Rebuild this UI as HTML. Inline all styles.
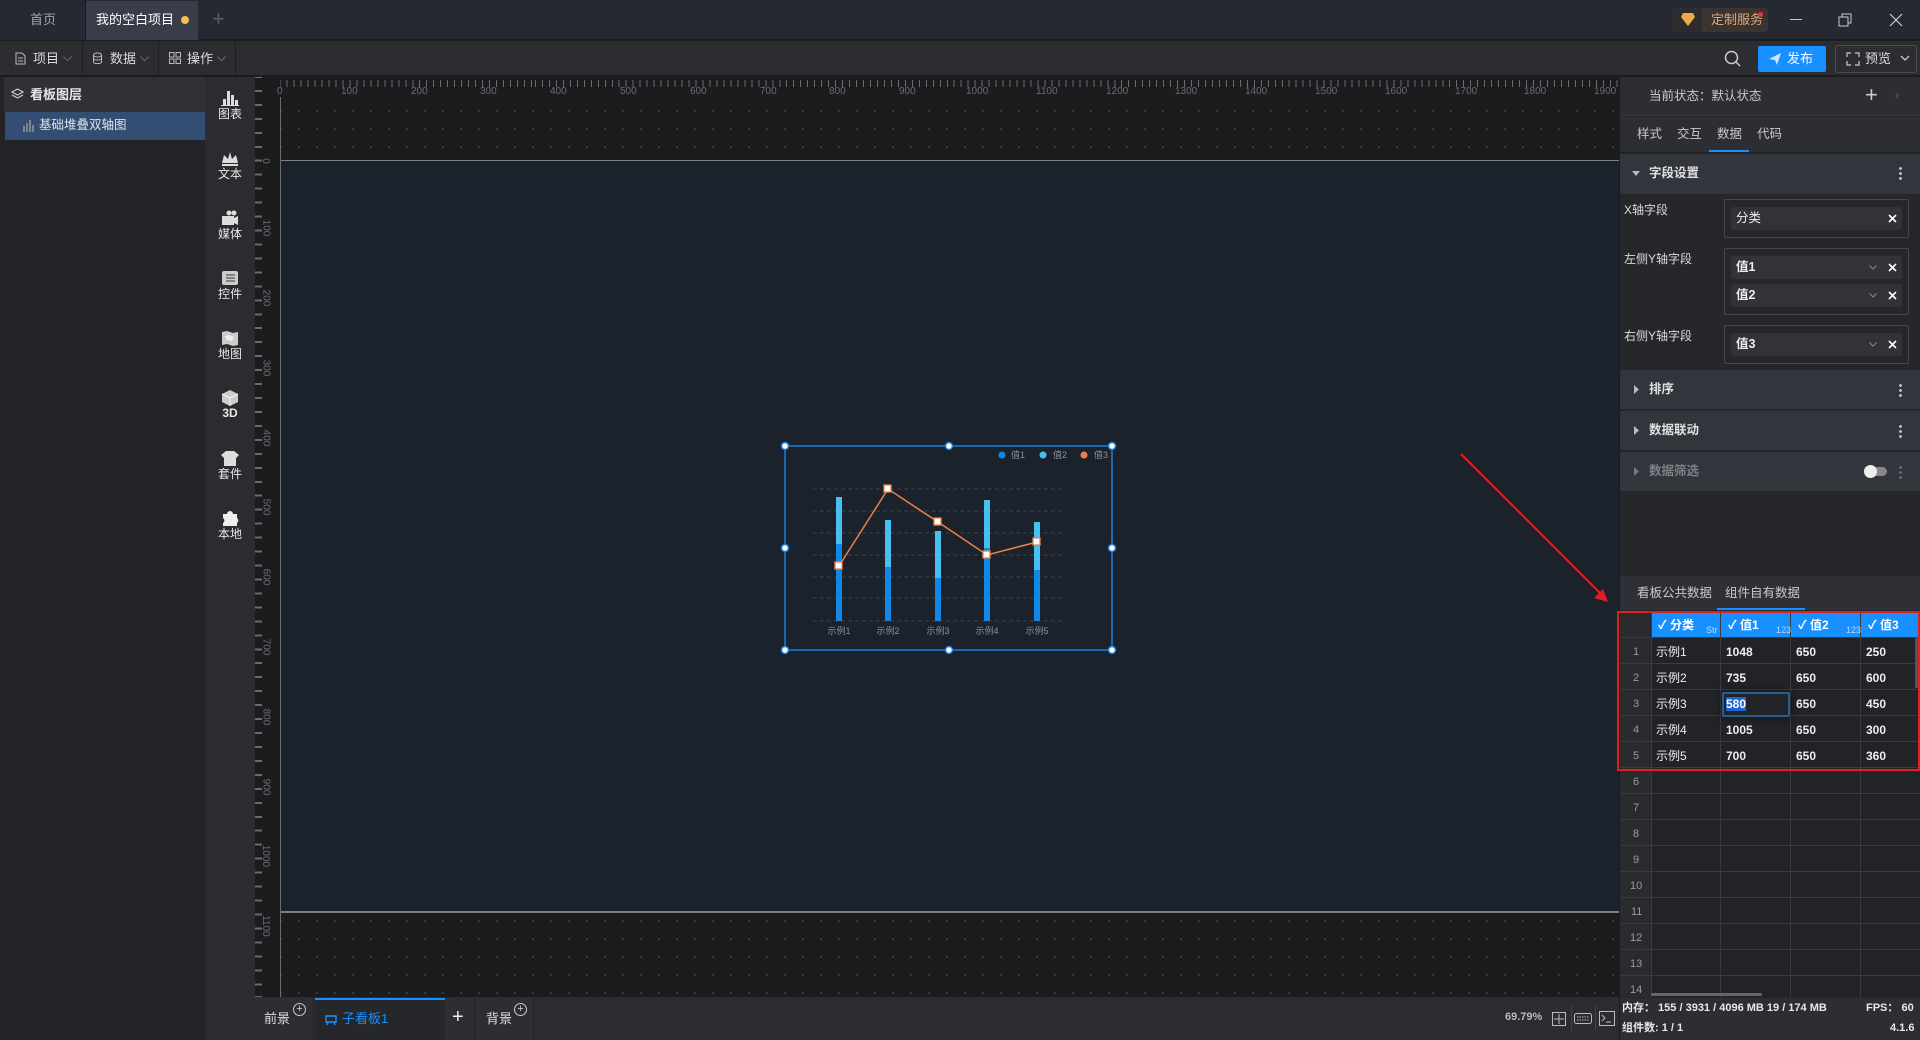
<!DOCTYPE html>
<html><head><meta charset="utf-8">
<style>
*{margin:0;padding:0;box-sizing:border-box}
body{width:1920px;height:1040px;overflow:hidden;background:#1b1c1e;font-family:"Liberation Sans","Noto Sans CJK SC",sans-serif;font-size:12px;line-height:1.2;color:#d0d2d6;position:relative}
.a{position:absolute}
.t{position:absolute;white-space:nowrap}
</style></head><body>
<!-- title bar -->
<div class="a" style="left:0;top:0;width:1920px;height:40px;background:#262931;border-bottom:1px solid #1a1b1e"></div>
<div class="a" style="left:0;top:0;width:86px;height:40px;background:#262931;border-right:1px solid #1a1b1e"></div>
<div class="t" style="left:30px;top:12px;color:#a0a3aa;font-size:13px">首页</div>
<div class="a" style="left:86px;top:1px;width:112px;height:39px;background:#393d49"></div>
<div class="t" style="left:96px;top:12px;color:#fff;font-size:13px">我的空白项目</div>
<div class="a" style="left:181px;top:16px;width:8px;height:8px;border-radius:50%;background:#f6c04e"></div>
<div class="t" style="left:212px;top:6px;color:#555a63;font-size:22px;font-weight:300">+</div>
<div class="a" style="left:1672px;top:8px;width:96px;height:24px;background:#3a332e;border-radius:3px"></div>
<div class="a" style="left:1672px;top:8px;width:30px;height:24px;background:#2c2c2f;border-radius:3px 0 0 3px"></div>
<svg class="a" style="left:1681px;top:13px" width="14" height="13"><path d="M2 0h10l2 4-7 9-7-9z" fill="#f0a94a"/></svg>
<div class="t" style="left:1711px;top:12px;color:#d9a982;font-size:13px">定制服务</div>
<div class="a" style="left:1758px;top:12px;width:5px;height:5px;border-radius:50%;background:#e53a3a"></div>
<div class="a" style="left:1790px;top:19px;width:12px;height:1px;background:#ccc"></div>
<svg class="a" style="left:1838px;top:13px" width="15" height="14"><rect x="1" y="4" width="9" height="9" fill="none" stroke="#ccc"/><path d="M4 4V1h9v9h-3" fill="none" stroke="#ccc"/></svg>
<svg class="a" style="left:1889px;top:13px" width="14" height="14"><path d="M1 1l12 12M13 1L1 13" stroke="#ccc" stroke-width="1.2"/></svg>

<!-- menu bar -->
<div class="a" style="left:0;top:41px;width:1920px;height:35px;background:#2c2d31;border-bottom:1px solid #1a1b1e"></div>
<div class="a" style="left:82px;top:41px;width:1px;height:35px;background:#1e1f22"></div>
<div class="a" style="left:158px;top:41px;width:1px;height:35px;background:#1e1f22"></div>
<div class="a" style="left:235px;top:41px;width:1px;height:35px;background:#1e1f22"></div>
<svg class="a" style="left:15px;top:52px" width="11" height="13"><path d="M1 1h6l3 3v8H1z M3 6h5M3 9h5" fill="none" stroke="#bbb"/></svg>
<div class="t" style="left:33px;top:51px;font-size:13px;color:#ddd">项目</div><div class="t" style="left:63px;top:50px;color:#999">⌵</div>
<svg class="a" style="left:92px;top:52px" width="11" height="13"><ellipse cx="5.5" cy="3" rx="4" ry="2" fill="none" stroke="#bbb"/><path d="M1.5 3v7c0 2 8 2 8 0V3M1.5 6.5c0 2 8 2 8 0" fill="none" stroke="#bbb"/></svg>
<div class="t" style="left:110px;top:51px;font-size:13px;color:#ddd">数据</div><div class="t" style="left:140px;top:50px;color:#999">⌵</div>
<svg class="a" style="left:169px;top:52px" width="12" height="12"><rect x="0.5" y="0.5" width="4.5" height="4.5" fill="none" stroke="#bbb"/><rect x="7" y="0.5" width="4.5" height="4.5" fill="none" stroke="#bbb"/><rect x="0.5" y="7" width="4.5" height="4.5" fill="none" stroke="#bbb"/><rect x="7" y="7" width="4.5" height="4.5" fill="none" stroke="#bbb"/></svg>
<div class="t" style="left:187px;top:51px;font-size:13px;color:#ddd">操作</div><div class="t" style="left:217px;top:50px;color:#999">⌵</div>
<svg class="a" style="left:1724px;top:50px" width="17" height="17"><circle cx="7.5" cy="7.5" r="6" fill="none" stroke="#ccc" stroke-width="1.5"/><path d="M12 12l4 4" stroke="#ccc" stroke-width="1.5"/></svg>
<div class="a" style="left:1758px;top:46px;width:68px;height:26px;background:#1890ff;border-radius:2px"></div>
<svg class="a" style="left:1769px;top:53px" width="12" height="12"><path d="M0 6l12-6-4 12-2-5z" fill="#cfe6ff"/></svg>
<div class="t" style="left:1787px;top:51px;color:#fff;font-size:13px">发布</div>
<div class="a" style="left:1835px;top:45px;width:82px;height:28px;border:1px solid #4a4c52;border-radius:3px"></div>
<svg class="a" style="left:1846px;top:52px" width="14" height="14"><path d="M1 5V1h4M9 1h4v4M13 9v4H9M5 13H1V9" fill="none" stroke="#ccc" stroke-width="1.2"/></svg>
<div class="t" style="left:1865px;top:51px;color:#ddd;font-size:13px">预览</div>
<svg class="a" style="left:1900px;top:55px" width="10" height="7"><path d="M1 1l4 4 4-4" fill="none" stroke="#ccc" stroke-width="1.3"/></svg>

<!-- layer panel -->
<div class="a" style="left:0;top:77px;width:205px;height:963px;background:#232427"></div>
<div class="a" style="left:4px;top:77px;width:201px;height:35px;background:#303136"></div>
<svg class="a" style="left:11px;top:88px" width="13" height="12"><path d="M6.5 1l5.5 3-5.5 3-5.5-3z M1 7l5.5 3 5.5-3" fill="none" stroke="#ccc" stroke-width="1.2"/></svg>
<div class="t" style="left:30px;top:87px;color:#e6e6e6;font-size:13px;font-weight:bold">看板图层</div>
<div class="a" style="left:5px;top:112px;width:200px;height:28px;background:#344d72"></div>
<svg class="a" style="left:23px;top:120px" width="11" height="12"><path d="M1 12V6M4 12V3M7 12V0M10 12V5" stroke="#999" stroke-width="1.5"/></svg>
<div class="t" style="left:39px;top:118px;color:#dfe4ea;font-size:12.5px">基础堆叠双轴图</div>

<!-- toolbar -->
<div class="a" style="left:205px;top:77px;width:50px;height:920px;background:#2b2c30"></div>
<div class="a" style="left:205px;top:997px;width:50px;height:43px;background:#2b2c30"></div>
<div style="position:absolute;left:205px;top:77px;width:50px;color:#e8e8e8;font-size:12px;text-align:center">
 <div style="position:absolute;top:13px;width:50px"><svg width="18" height="16"><path d="M2 16V9h3v7M6 16V1h3v15M10 16V5h3v11M14 16V10h3v6" fill="#ddd"/><rect x="0" y="15" width="18" height="1" fill="#ddd"/></svg><div style="margin-top:-2px">图表</div></div>
 <div style="position:absolute;top:73px;width:50px"><svg width="18" height="16"><path d="M1 13l2-8 4 4 2-7 2 7 4-4 2 8z" fill="#ddd"/><rect x="1" y="14" width="16" height="2" fill="#ddd"/></svg><div style="margin-top:-2px">文本</div></div>
 <div style="position:absolute;top:133px;width:50px"><svg width="18" height="16"><circle cx="8" cy="3" r="2.5" fill="#ddd"/><circle cx="13" cy="3" r="2.5" fill="#ddd"/><rect x="1" y="6" width="12" height="9" fill="#ddd"/><path d="M13 8l4-2v9l-4-2z" fill="#ddd"/></svg><div style="margin-top:-2px">媒体</div></div>
 <div style="position:absolute;top:193px;width:50px"><svg width="18" height="16"><rect x="1" y="1" width="16" height="14" rx="2" fill="#ccc"/><path d="M5 5h9M5 8h9M5 11h9" stroke="#555" stroke-width="1.3"/></svg><div style="margin-top:-2px">控件</div></div>
 <div style="position:absolute;top:253px;width:50px"><svg width="18" height="16"><path d="M1 2l5-1 6 2 5-1v13l-5 1-6-2-5 1z" fill="#ccc"/><path d="M4 6l4-1 5 2-2 4-5-1z" fill="#eee"/></svg><div style="margin-top:-2px">地图</div></div>
 <div style="position:absolute;top:313px;width:50px"><svg width="18" height="16"><path d="M9 0l8 4v8l-8 4-8-4V4z" fill="#ccc"/><path d="M1 4l8 4 8-4M9 8v8" fill="none" stroke="#fff" stroke-width=".8"/></svg><div style="margin-top:-3px;font-weight:bold">3D</div></div>
 <div style="position:absolute;top:373px;width:50px"><svg width="18" height="16"><path d="M5 1h8l5 4-3 3v8H3V8L0 5z" fill="#ddd"/></svg><div style="margin-top:-2px">套件</div></div>
 <div style="position:absolute;top:433px;width:50px"><svg width="18" height="16"><path d="M2 4h4a3 3 0 016 0h4v4a3 3 0 010 5v3H2v-3a3 3 0 000-5z" fill="#eee"/></svg><div style="margin-top:-2px">本地</div></div>
</div>

<!-- canvas area -->
<div class="a" style="left:255px;top:77px;width:1365px;height:920px;background-color:#1b1c1e;background-image:radial-gradient(circle,#3c3e42 0.9px,transparent 1.2px);background-size:18px 18px;background-position:-1px 7px"></div>
<div class="a" style="left:280px;top:160px;width:1340px;height:753px;background:#1c222b;border-top:1px solid #7c7e82;border-bottom:2px solid #7c7e82"></div>
<div class="a" style="left:280px;top:97px;width:1px;height:900px;background:#6a6c70"></div>
<!-- rulers -->
<div class="a" style="left:255px;top:77px;width:1365px;height:20px;background:#1b1c1e;background-image:repeating-linear-gradient(90deg,#6a6c70 0 1px,transparent 1px 6.979px);background-position:280px 0;background-size:auto 7px;background-repeat:repeat-x;background-position-y:3px"></div>
<div class="a" style="left:255px;top:77px;width:25px;height:920px;background:#1b1c1e;background-image:repeating-linear-gradient(180deg,#6a6c70 0 2px,transparent 2px 13.958px);background-size:7px auto;background-repeat:repeat-y;background-position:0 -1px"></div>
<div style="position:absolute;left:0;top:0;color:#6b6d72;font-size:10px">
<span class="t" style="left:341px;top:86px">100</span><span class="t" style="left:411px;top:86px">200</span><span class="t" style="left:480px;top:86px">300</span><span class="t" style="left:550px;top:86px">400</span><span class="t" style="left:620px;top:86px">500</span><span class="t" style="left:690px;top:86px">600</span><span class="t" style="left:760px;top:86px">700</span><span class="t" style="left:829px;top:86px">800</span><span class="t" style="left:899px;top:86px">900</span><span class="t" style="left:966px;top:86px">1000</span><span class="t" style="left:1036px;top:86px">1100</span><span class="t" style="left:1106px;top:86px">1200</span><span class="t" style="left:1175px;top:86px">1300</span><span class="t" style="left:1245px;top:86px">1400</span><span class="t" style="left:1315px;top:86px">1500</span><span class="t" style="left:1385px;top:86px">1600</span><span class="t" style="left:1455px;top:86px">1700</span><span class="t" style="left:1524px;top:86px">1800</span><span class="t" style="left:1594px;top:86px">1900</span><span class="t" style="left:277px;top:86px">0</span>
</div>
<div style="position:absolute;left:0;top:0;color:#6b6d72;font-size:10px">
<span class="t" style="left:262px;top:155px;transform:rotate(90deg)">0</span>
<span class="t" style="left:257px;top:222px;transform:rotate(90deg)">100</span><span class="t" style="left:257px;top:292px;transform:rotate(90deg)">200</span><span class="t" style="left:257px;top:362px;transform:rotate(90deg)">300</span><span class="t" style="left:257px;top:432px;transform:rotate(90deg)">400</span><span class="t" style="left:257px;top:501px;transform:rotate(90deg)">500</span><span class="t" style="left:257px;top:571px;transform:rotate(90deg)">600</span><span class="t" style="left:257px;top:641px;transform:rotate(90deg)">700</span><span class="t" style="left:257px;top:711px;transform:rotate(90deg)">800</span><span class="t" style="left:257px;top:781px;transform:rotate(90deg)">900</span><span class="t" style="left:254px;top:850px;transform:rotate(90deg)">1000</span><span class="t" style="left:254px;top:920px;transform:rotate(90deg)">1100</span>
</div>

<!-- chart -->
<svg class="a" style="left:770px;top:435px" width="360" height="230" font-family="Liberation Sans,Noto Sans CJK SC,sans-serif">
<g transform="translate(-770,-435)">
<g stroke="#3a404a" stroke-dasharray="4 3" stroke-width="1">
<path d="M813 489H1062M813 511H1062M813 533H1062M813 555H1062M813 577H1062M813 598H1062M813 621H1062"/></g>
<g fill="#1187e6"><rect x="836" y="544" width="6" height="77"/><rect x="885" y="567" width="6" height="54"/><rect x="935" y="578" width="6" height="43"/><rect x="984" y="548" width="6" height="73"/><rect x="1034" y="570" width="6" height="51"/></g>
<g fill="#46c1ef"><rect x="836" y="497" width="6" height="47"/><rect x="885" y="520" width="6" height="47"/><rect x="935" y="531" width="6" height="47"/><rect x="984" y="500" width="6" height="48"/><rect x="1034" y="522" width="6" height="48"/></g>
<path d="M839 566L888 489L938 522L987 555L1037 542" fill="none" stroke="#e8834a" stroke-width="1.5"/>
<g fill="#fff" stroke="#e8834a" stroke-width="1.3"><rect x="835" y="562" width="7" height="7"/><rect x="884" y="485" width="7" height="7"/><rect x="934" y="518" width="7" height="7"/><rect x="983" y="551" width="7" height="7"/><rect x="1033" y="538" width="7" height="7"/></g>
<g fill="#8c929c" font-size="9" text-anchor="middle"><text x="839" y="634">示例1</text><text x="888" y="634">示例2</text><text x="938" y="634">示例3</text><text x="987" y="634">示例4</text><text x="1037" y="634">示例5</text></g>
<circle cx="1002" cy="455" r="3.5" fill="#1187e6"/><circle cx="1043" cy="455" r="3.5" fill="#46c1ef"/><circle cx="1084" cy="455" r="3.5" fill="#e8834a"/>
<g fill="#8c929c" font-size="9"><text x="1011" y="458">值1</text><text x="1053" y="458">值2</text><text x="1094" y="458">值3</text></g>
<rect x="785" y="446" width="327" height="204" fill="none" stroke="#1a7fe0" stroke-width="1.5"/>
<g fill="#fff" stroke="#1a7fe0" stroke-width="1.5"><circle cx="785" cy="446" r="3.5"/><circle cx="949" cy="446" r="3.5"/><circle cx="1112" cy="446" r="3.5"/><circle cx="785" cy="548" r="3.5"/><circle cx="1112" cy="548" r="3.5"/><circle cx="785" cy="650" r="3.5"/><circle cx="949" cy="650" r="3.5"/><circle cx="1112" cy="650" r="3.5"/></g>
</g></svg>

<!-- red arrow -->
<svg class="a" style="left:1450px;top:445px" width="170" height="170"><path d="M11 9L152 150" stroke="#e02020" stroke-width="2"/><path d="M158 157l-14-4 9-9z" fill="#e02020"/></svg>

<!-- bottom bar -->
<div class="a" style="left:255px;top:997px;width:1365px;height:43px;background:#2b2c30"></div>
<div class="a" style="left:255px;top:998px;width:59px;height:42px;background:#2d2e33;border-right:1px solid #222"></div>
<div class="t" style="left:264px;top:1011px;color:#ddd;font-size:13px">前景</div>
<div class="t" style="left:293px;top:1003px;width:13px;height:13px;border:1px solid #ccc;border-radius:50%;font-size:11px;line-height:11px;text-align:center;color:#ccc">+</div>
<div class="a" style="left:315px;top:998px;width:130px;height:42px;background:#26272b;border-top:2px solid #1890ff"></div>
<svg class="a" style="left:325px;top:1015px" width="12" height="11"><path d="M1 1h10v6H1zM3 7l-1 3M9 7l1 3" fill="none" stroke="#1890ff" stroke-width="1.4"/></svg>
<div class="t" style="left:342px;top:1011px;color:#1890ff;font-size:13px">子看板1</div>
<div class="a" style="left:445px;top:998px;width:30px;height:42px;background:#2d2e33;border-right:1px solid #222"></div>
<div class="t" style="left:452px;top:1005px;color:#eee;font-size:20px">+</div>
<div class="a" style="left:476px;top:998px;width:58px;height:42px;background:#2d2e33;border-right:1px solid #222"></div>
<div class="t" style="left:486px;top:1011px;color:#ddd;font-size:13px">背景</div>
<div class="t" style="left:514px;top:1003px;width:13px;height:13px;border:1px solid #ccc;border-radius:50%;font-size:11px;line-height:11px;text-align:center;color:#ccc">+</div>
<div class="t" style="left:1505px;top:1011px;color:#bbb;font-size:11px;font-weight:bold">69.79%</div>
<svg class="a" style="left:1552px;top:1012px" width="14" height="14"><rect x=".5" y=".5" width="13" height="13" fill="none" stroke="#bbb"/><path d="M7 2v10M2 7h10" stroke="#bbb"/></svg>
<div class="a" style="left:1571px;top:1005px;width:1px;height:26px;background:#444"></div>
<svg class="a" style="left:1574px;top:1013px" width="18" height="11"><rect x=".5" y=".5" width="17" height="10" rx="2" fill="none" stroke="#bbb"/><path d="M3 4h12M3 7h12" stroke="#bbb" stroke-dasharray="1.5 1"/></svg>
<div class="a" style="left:1595px;top:1005px;width:1px;height:26px;background:#444"></div>
<svg class="a" style="left:1599px;top:1011px" width="16" height="15"><rect x=".5" y=".5" width="15" height="14" fill="none" stroke="#bbb"/><path d="M3 4l3 3-3 3M7 11h5" fill="none" stroke="#bbb"/></svg>

<!-- right panel -->
<div class="a" style="left:1619px;top:77px;width:301px;height:963px;background:#26272b;border-left:1px solid #1a1b1e"></div>
<div class="a" style="left:1620px;top:77px;width:300px;height:39px;background:#2d2e33;border-bottom:1px solid #3a3b40"></div>
<div class="t" style="left:1649px;top:89px;color:#c8cacd;font-size:12.5px">当前状态：默认状态</div>
<div class="t" style="left:1865px;top:82px;color:#ccc;font-size:22px;font-weight:300">+</div>
<div class="t" style="left:1895px;top:88px;color:#666;font-size:12px">›</div>
<div class="a" style="left:1620px;top:117px;width:300px;height:36px;background:#2d2e33;border-bottom:1px solid #1f2023"></div>
<div class="t" style="left:1637px;top:127px;color:#c8cacd;font-size:12.5px">样式</div>
<div class="t" style="left:1677px;top:127px;color:#c8cacd;font-size:12.5px">交互</div>
<div class="t" style="left:1717px;top:127px;color:#c8cacd;font-size:12.5px">数据</div>
<div class="t" style="left:1757px;top:127px;color:#c8cacd;font-size:12.5px">代码</div>
<div class="a" style="left:1709px;top:150px;width:40px;height:2px;background:#1890ff"></div>
<!-- 字段设置 -->
<div class="a" style="left:1620px;top:154px;width:300px;height:40px;background:#33353c"></div>
<svg class="a" style="left:1632px;top:171px" width="9" height="6"><path d="M0 0h8L4 5z" fill="#bbb"/></svg>
<div class="t" style="left:1649px;top:166px;color:#e0e0e0;font-size:12.5px;font-weight:bold">字段设置</div>
<div class="a" style="left:1899px;top:166px;width:3px;height:14px;background:radial-gradient(circle,#bbb 1.3px,transparent 1.6px) 0 0/3px 5px"></div>
<div class="t" style="left:1624px;top:203px;color:#dcdcdc;font-size:12px">X轴字段</div>
<div class="t" style="left:1624px;top:252px;color:#dcdcdc;font-size:12px">左侧Y轴字段</div>
<div class="t" style="left:1624px;top:329px;color:#dcdcdc;font-size:12px">右侧Y轴字段</div>
<div class="a" style="left:1724px;top:199px;width:185px;height:39px;border:1px solid #45474d;border-radius:2px"></div>
<div class="a" style="left:1724px;top:248px;width:185px;height:67px;border:1px solid #45474d;border-radius:2px"></div>
<div class="a" style="left:1724px;top:325px;width:185px;height:39px;border:1px solid #45474d;border-radius:2px"></div>
<div class="a" style="left:1731px;top:207px;width:171px;height:23px;background:#323337;border-radius:3px"></div>
<div class="a" style="left:1731px;top:256px;width:171px;height:23px;background:#323337;border-radius:3px"></div>
<div class="a" style="left:1731px;top:284px;width:171px;height:23px;background:#323337;border-radius:3px"></div>
<div class="a" style="left:1731px;top:333px;width:171px;height:23px;background:#323337;border-radius:3px"></div>
<div class="t" style="left:1736px;top:211px;color:#eee;font-size:12.5px">分类</div>
<div class="t" style="left:1736px;top:260px;color:#eee;font-size:12.5px;font-weight:bold">值1</div>
<div class="t" style="left:1736px;top:288px;color:#eee;font-size:12.5px;font-weight:bold">值2</div>
<div class="t" style="left:1736px;top:337px;color:#eee;font-size:12.5px;font-weight:bold">值3</div>
<svg class="a" style="left:1888px;top:214px" width="9" height="9"><path d="M1 1l7 7M8 1L1 8" stroke="#fff" stroke-width="1.6"/></svg>
<svg class="a" style="left:1888px;top:263px" width="9" height="9"><path d="M1 1l7 7M8 1L1 8" stroke="#fff" stroke-width="1.6"/></svg>
<svg class="a" style="left:1888px;top:291px" width="9" height="9"><path d="M1 1l7 7M8 1L1 8" stroke="#fff" stroke-width="1.6"/></svg>
<svg class="a" style="left:1888px;top:340px" width="9" height="9"><path d="M1 1l7 7M8 1L1 8" stroke="#fff" stroke-width="1.6"/></svg>
<svg class="a" style="left:1869px;top:265px" width="8" height="5"><path d="M0.5 0.5l3.5 3.5 3.5-3.5" fill="none" stroke="#888"/></svg>
<svg class="a" style="left:1869px;top:293px" width="8" height="5"><path d="M0.5 0.5l3.5 3.5 3.5-3.5" fill="none" stroke="#888"/></svg>
<svg class="a" style="left:1869px;top:342px" width="8" height="5"><path d="M0.5 0.5l3.5 3.5 3.5-3.5" fill="none" stroke="#888"/></svg>
<!-- collapsed sections -->
<div class="a" style="left:1620px;top:370px;width:300px;height:40px;background:#33353c;border-bottom:1px solid #26272b"></div>
<div class="a" style="left:1620px;top:411px;width:300px;height:40px;background:#33353c;border-bottom:1px solid #26272b"></div>
<div class="a" style="left:1620px;top:452px;width:300px;height:39px;background:#33353c"></div>
<svg class="a" style="left:1634px;top:385px" width="6" height="9"><path d="M0 0l5 4.5L0 9z" fill="#bbb"/></svg>
<svg class="a" style="left:1634px;top:426px" width="6" height="9"><path d="M0 0l5 4.5L0 9z" fill="#bbb"/></svg>
<svg class="a" style="left:1634px;top:467px" width="6" height="9"><path d="M0 0l5 4.5L0 9z" fill="#777"/></svg>
<div class="t" style="left:1649px;top:382px;color:#e0e0e0;font-size:12.5px;font-weight:bold">排序</div>
<div class="t" style="left:1649px;top:423px;color:#e0e0e0;font-size:12.5px;font-weight:bold">数据联动</div>
<div class="t" style="left:1649px;top:464px;color:#808288;font-size:12.5px;font-weight:bold">数据筛选</div>
<div class="a" style="left:1899px;top:383px;width:3px;height:14px;background:radial-gradient(circle,#bbb 1.3px,transparent 1.6px) 0 0/3px 5px"></div>
<div class="a" style="left:1899px;top:424px;width:3px;height:14px;background:radial-gradient(circle,#bbb 1.3px,transparent 1.6px) 0 0/3px 5px"></div>
<div class="a" style="left:1899px;top:465px;width:3px;height:14px;background:radial-gradient(circle,#666 1.3px,transparent 1.6px) 0 0/3px 5px"></div>
<div class="a" style="left:1864px;top:467px;width:23px;height:9px;border-radius:5px;background:#888"></div>
<div class="a" style="left:1864px;top:465px;width:13px;height:13px;border-radius:50%;background:#eee"></div>
<!-- data tabs -->
<div class="a" style="left:1620px;top:576px;width:300px;height:34px;background:#2f3035"></div>
<div class="t" style="left:1637px;top:586px;color:#c8cacd;font-size:12.5px">看板公共数据</div>
<div class="t" style="left:1725px;top:586px;color:#c8cacd;font-size:12.5px">组件自有数据</div>
<div class="a" style="left:1717px;top:608px;width:88px;height:2px;background:#1890ff"></div>
<!-- table -->
<div class="a" style="left:1620px;top:612px;width:300px;height:385px;background:#222326"></div>
<div class="a" style="left:1620px;top:612px;width:31px;height:385px;background:#2a2b2f"></div>
<div class="a" style="left:1651px;top:612px;width:269px;height:26px;background:#1890ff"></div>
<div class="a" style="left:1620px;top:612px;width:300px;height:385px;background-image:repeating-linear-gradient(180deg,transparent 0 25px,#3a3b3f 25px 26px);background-position:0 0"></div>
<div class="a" style="left:1720px;top:612px;width:1px;height:385px;background:#3a3b3f"></div>
<div class="a" style="left:1790px;top:612px;width:1px;height:385px;background:#3a3b3f"></div>
<div class="a" style="left:1860px;top:612px;width:1px;height:385px;background:#3a3b3f"></div>
<div class="a" style="left:1651px;top:612px;width:1px;height:385px;background:#3a3b3f"></div>
<div style="position:absolute;left:0;top:0;color:#fff;font-size:12px;font-weight:bold">
<span class="t" style="left:1658px;top:618px">✓ 分类</span><span class="t" style="left:1706px;top:625px;font-size:9px;font-weight:normal;color:#b8dcff">Str</span>
<span class="t" style="left:1728px;top:618px">✓ 值1</span><span class="t" style="left:1776px;top:625px;font-size:9px;font-weight:normal;color:#b8dcff">123</span>
<span class="t" style="left:1798px;top:618px">✓ 值2</span><span class="t" style="left:1846px;top:625px;font-size:9px;font-weight:normal;color:#b8dcff">123</span>
<span class="t" style="left:1868px;top:618px">✓ 值3</span>
</div>
<div style="position:absolute;left:0;top:0;font-size:11px;color:#9a9ca0">
<span class="t" style="left:1633px;top:646px">1</span><span class="t" style="left:1633px;top:672px">2</span><span class="t" style="left:1633px;top:698px">3</span><span class="t" style="left:1633px;top:724px">4</span><span class="t" style="left:1633px;top:750px">5</span><span class="t" style="left:1633px;top:776px">6</span><span class="t" style="left:1633px;top:802px">7</span><span class="t" style="left:1633px;top:828px">8</span><span class="t" style="left:1633px;top:854px">9</span><span class="t" style="left:1630px;top:880px">10</span><span class="t" style="left:1631px;top:906px">11</span><span class="t" style="left:1630px;top:932px">12</span><span class="t" style="left:1630px;top:958px">13</span><span class="t" style="left:1630px;top:984px">14</span>
</div>
<div style="position:absolute;left:0;top:0;font-size:12px;color:#eee;font-weight:bold">
<span class="t" style="left:1656px;top:645px;font-weight:normal">示例1</span><span class="t" style="left:1726px;top:645px">1048</span><span class="t" style="left:1796px;top:645px">650</span><span class="t" style="left:1866px;top:645px">250</span>
<span class="t" style="left:1656px;top:671px;font-weight:normal">示例2</span><span class="t" style="left:1726px;top:671px">735</span><span class="t" style="left:1796px;top:671px">650</span><span class="t" style="left:1866px;top:671px">600</span>
<span class="t" style="left:1656px;top:697px;font-weight:normal">示例3</span><span class="t" style="left:1796px;top:697px">650</span><span class="t" style="left:1866px;top:697px">450</span>
<span class="t" style="left:1656px;top:723px;font-weight:normal">示例4</span><span class="t" style="left:1726px;top:723px">1005</span><span class="t" style="left:1796px;top:723px">650</span><span class="t" style="left:1866px;top:723px">300</span>
<span class="t" style="left:1656px;top:749px;font-weight:normal">示例5</span><span class="t" style="left:1726px;top:749px">700</span><span class="t" style="left:1796px;top:749px">650</span><span class="t" style="left:1866px;top:749px">360</span>
</div>
<div class="a" style="left:1722px;top:692px;width:68px;height:25px;border:2px solid #2b5d95;border-radius:2px;background:#222326;box-shadow:0 0 8px rgba(0,0,0,.6)"></div>
<span class="t" style="left:1726px;top:697px;font-size:12px;color:#fff;font-weight:bold;background:#1a66d6">580</span>
<div class="a" style="left:1915px;top:638px;width:3px;height:50px;background:#555"></div>
<div class="a" style="left:1651px;top:993px;width:111px;height:3px;background:#666;border-radius:2px"></div>
<div class="a" style="left:1617px;top:611px;width:303px;height:160px;border:2px solid #e02020"></div>
<!-- footer -->
<div class="a" style="left:1620px;top:998px;width:300px;height:42px;background:#2d2e33"></div>
<div class="t" style="left:1622px;top:1002px;color:#e8e8e8;font-size:11px;font-weight:bold">内存： 155 / 3931 / 4096 MB 19 / 174 MB</div>
<div class="t" style="left:1866px;top:1002px;color:#e8e8e8;font-size:11px;font-weight:bold">FPS： 60</div>
<div class="t" style="left:1622px;top:1022px;color:#e8e8e8;font-size:11px;font-weight:bold">组件数: 1 / 1</div>
<div class="t" style="left:1890px;top:1022px;color:#e8e8e8;font-size:11px;font-weight:bold">4.1.6</div>
</body></html>
